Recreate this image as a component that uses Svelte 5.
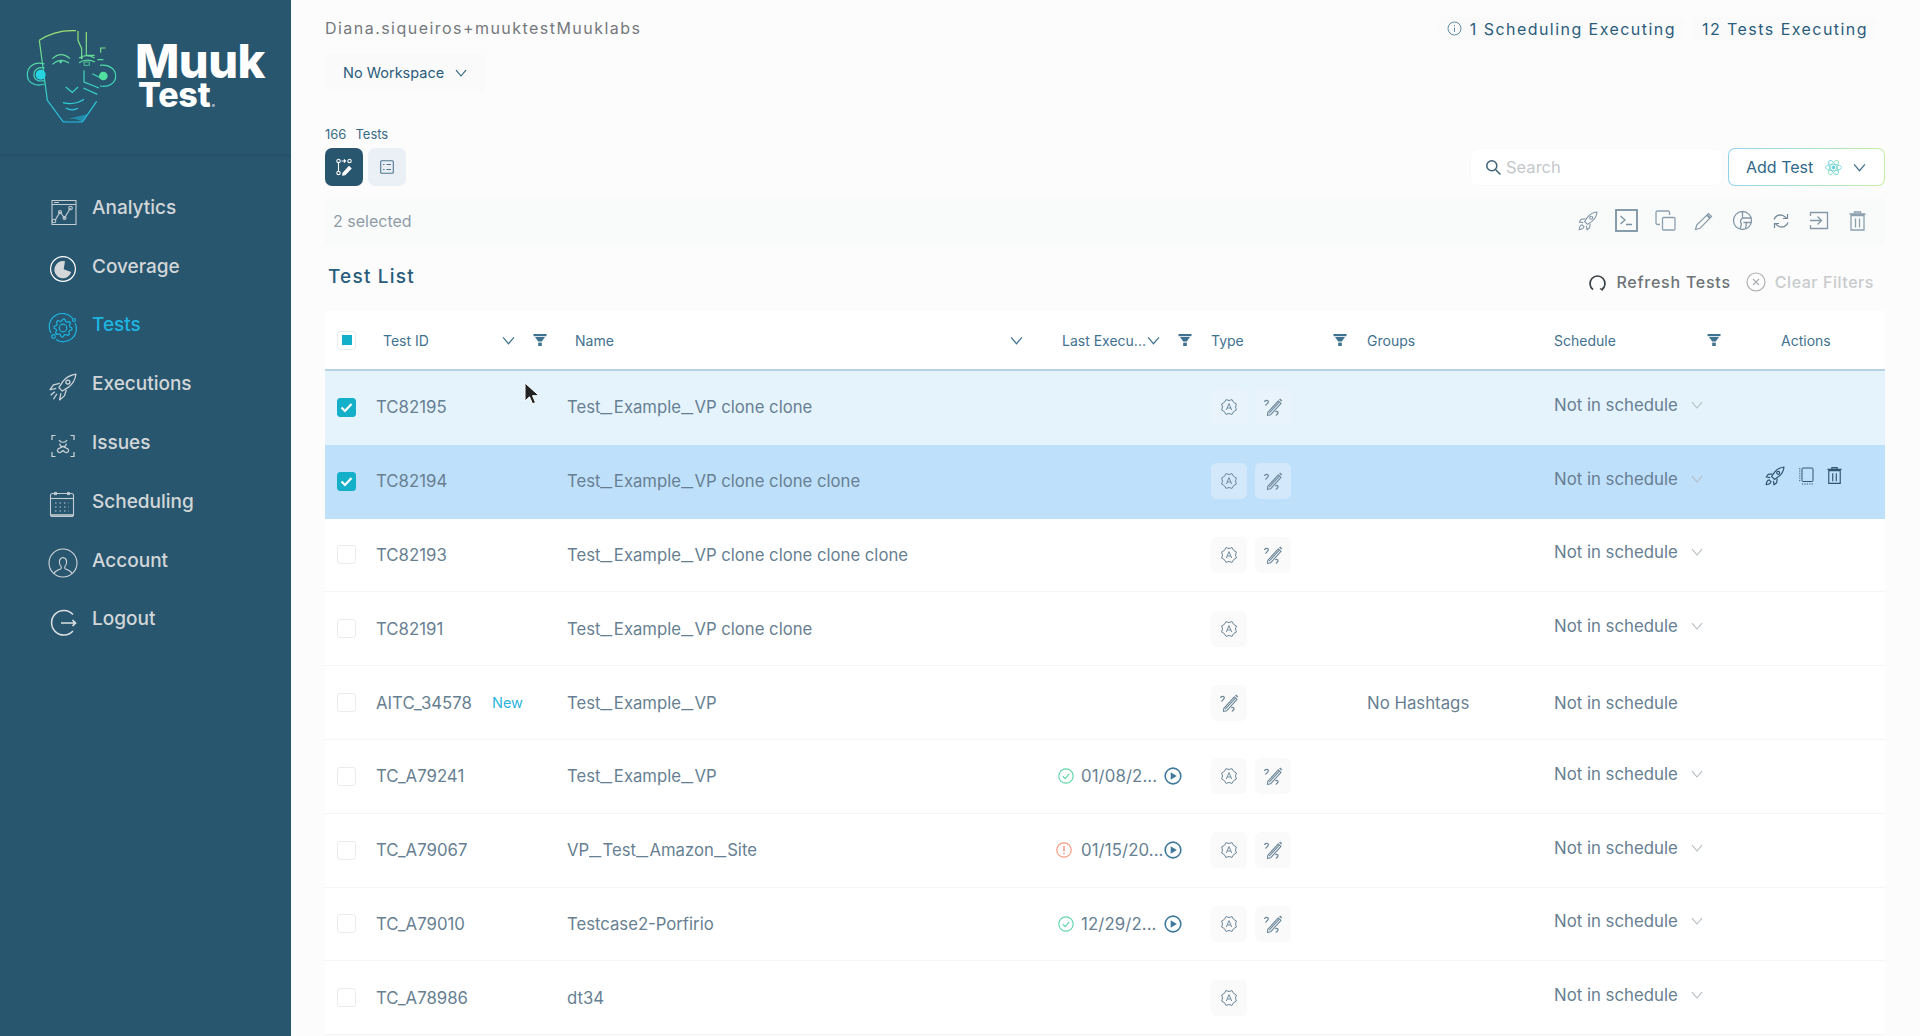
<script>
  const nav = ['Analytics','Coverage','Tests','Executions','Issues','Scheduling','Account','Logout'];
  const rows = [
    {id:'TC82195',name:'Test_Example_VP clone clone',a:1,p:1,cls:'sel'},
    {id:'TC82194',name:'Test_Example_VP clone clone clone',a:1,p:1,cls:'hot'},
    {id:'TC82193',name:'Test_Example_VP clone clone clone clone',a:1,p:1},
    {id:'TC82191',name:'Test_Example_VP clone clone',a:1},
    {id:'AITC_34578',name:'Test_Example_VP',p:1,isNew:1,groups:'No Hashtags',plain:1},
    {id:'TC_A79241',name:'Test_Example_VP',a:1,p:1,date:'01/08/2...',st:'ok'},
    {id:'TC_A79067',name:'VP_Test_Amazon_Site',a:1,p:1,date:'01/15/20...',st:'warn'},
    {id:'TC_A79010',name:'Testcase2-Porfirio',a:1,p:1,date:'12/29/2...',st:'ok'},
    {id:'TC_A78986',name:'dt34',a:1}
  ];
  function gear(cx, cy, r1, r2, n) {
    let d = '';
    for (let i = 0; i < n * 4; i++) {
      const r = (i % 4 < 2) ? r2 : r1;
      const t = (i / (n * 4)) * Math.PI * 2;
      d += (i ? 'L' : 'M') + (cx + r * Math.cos(t)).toFixed(2) + ' ' + (cy + r * Math.sin(t)).toFixed(2);
    }
    return d + 'Z';
  }
  function scallop(cx, cy, r, n) {
    let d = '';
    for (let i = 0; i < n * 2; i++) {
      const rr = i % 2 ? r : r - 1.5;
      const t = (i / (n * 2)) * Math.PI * 2 - Math.PI / 2;
      d += (i ? 'L' : 'M') + (cx + rr * Math.cos(t)).toFixed(2) + ' ' + (cy + rr * Math.sin(t)).toFixed(2);
    }
    return d + 'Z';
  }
</script>

{#snippet chevron(w, color)}
  <svg class="chev" width={w} height={w} viewBox="0 0 12 12" fill="none" stroke={color} stroke-width="1.1"><path d="M1 3.2 6 9 11 3.2"/></svg>
{/snippet}
{#snippet funnel()}
  <svg class="funnel" width="14" height="14" viewBox="0 0 14 14" fill="#3f7290"><path d="M0.5 1h13v2.2h-13z"/><path d="M2 4h10L8.8 8.6H5.2z"/><path d="M5.2 9.6h3.6V13H5.2z"/></svg>
{/snippet}
{#snippet badgeA()}
  <svg width="18" height="18" viewBox="0 0 18 18" fill="none" stroke="#6d8799" stroke-width="1"><path d={scallop(9,9,8,8)} stroke-linejoin="round"/><path d="M6.300 12 9 5.600 11.700 12M7.200 10h3.600" stroke-width="0.95"/></svg>
{/snippet}
{#snippet pen()}
  <svg width="20" height="20" viewBox="0 0 18 18" fill="none" stroke="#6d8799" stroke-width="1"><path d="M4.300 13.800 13.800 3.500l2.400 2.200L6.800 16l-2.800.6z" stroke-linejoin="round"/><path d="M5.500 14.500 14.800 4.600" stroke-width="1"/><path d="M15 1.800l1.800 1.800" stroke-width="1.300"/><path d="M1.500 4c1-1.500 3-1.300 3.300 0 .3 1.400-1.600 2.200-2.300 3.400M11.500 13.200c1.300-.5 2.400.3 1.900 1.500-.3.700-1 1.200-1.500 1.600" stroke-linecap="round" stroke-width="1.100"/></svg>
{/snippet}
{#snippet play()}
  <svg width="18" height="18" viewBox="0 0 17 17" fill="none"><circle cx="8.500" cy="8.500" r="7.400" stroke="#3f7a9e" stroke-width="1.500"/><path d="M6.300 4.900v7.200l5.800-3.600z" fill="#3f7a9e"/></svg>
{/snippet}
{#snippet rocket(c, sw)}
  <svg width="22" height="22" viewBox="0 0 22 22" fill="none" stroke={c} stroke-width={sw} stroke-linejoin="round"><path d="M20 2c-4 .4-7.400 2.400-9.600 5.400L7.600 11.500l2.900 2.900 4.100-2.800C17.600 9.400 19.600 6 20 2z"/><circle cx="14.200" cy="7.800" r="1.500"/><path d="M8.400 8.800 4.200 9.400 2.200 12l4 .6M13.200 13.600l-.6 4.200-2.600 2-.6-4"/><path d="M5.200 14.800c-1.500.3-2.700 1.500-3 4.800 3.300-.3 4.500-1.500 4.800-3z"/></svg>
{/snippet}

<div class="app">
  <aside class="side">
    <div class="brand">
      <svg class="face" width="100" height="100" viewBox="70 85 300 300" fill="none" stroke="url(#fg)" stroke-width="3.600">
        <defs>
          <linearGradient id="fg" gradientUnits="userSpaceOnUse" x1="200" y1="90" x2="200" y2="375">
            <stop offset="0" stop-color="#a4e26a"/><stop offset="0.45" stop-color="#43d6b0"/><stop offset="1" stop-color="#22c4e8"/>
          </linearGradient>
        </defs>
        <path d="M116 125C150 102 190 94 226 96M116 125 140 305 188 370H245L288 308"/>
        <path d="M186 370C210 352 232 362 245 370L262 346 212 358z" fill="#22b8dd" stroke="none" opacity=".55"/>
        <path d="M232 97V125L243 150V176"/><circle cx="243" cy="178" r="3.500" fill="#7fdc8f" stroke="none"/>
        <path d="M257 100V170H282M300 162V148H315M290 183H308"/>
        <path d="M155 180C172 164 190 164 208 180M155 197C172 182 190 182 205 193"/><circle cx="180" cy="190" r="4" fill="#5ed8b0" stroke="none"/>
        <path d="M235 178C250 168 268 170 282 178M235 192C250 183 268 183 283 190"/><path d="M250 190h16v10h-16z" stroke-width="2.500"/>
        <path d="M195 265 215 281 232 265M187 312C210 318 232 314 250 302M195 328C208 335 222 334 232 329"/>
        <path d="M250 215V250L295 268M248 268 290 287M298 200C330 196 345 215 345 232 345 252 325 268 298 262"/>
        <path d="M275 225 300 238"/><circle cx="308" cy="232" r="13" fill="#52e0a0" stroke="none"/>
        <path d="M132 196C100 186 80 205 80 228 80 250 100 266 132 256M132 208C112 204 100 214 100 228 100 242 112 250 132 246"/>
        <circle cx="120" cy="228" r="15" fill="#25d4e0" stroke="none"/>
      </svg>
      <div class="word"><span class="w1">Muuk</span><span class="w2">Test<i>.</i></span></div>
    </div>
    <nav>
      {#each nav as n}
        <div class="item" class:on={n === 'Tests'}>
          <span class="ic">
            {#if n === 'Analytics'}
              <svg width="30" height="30" viewBox="0 0 30 30" fill="none" stroke="#c2ccd2" stroke-width="1.100"><path d="M4 5.500h24v24H4z"/><path d="M4 9.500h24M6 7.500h5" /><path d="M7 25.500 12 17l4.500 6 6-10" stroke-width="1.200"/><circle cx="6" cy="26" r="1.800"/><circle cx="12" cy="17" r="1.500"/><circle cx="16.500" cy="23" r="1.500"/><circle cx="22.500" cy="13" r="1.800"/></svg>
            {:else if n === 'Coverage'}
              <svg width="30" height="30" viewBox="0 0 30 30" fill="none"><circle cx="15" cy="15" r="12.400" stroke="#fff" stroke-width="1.200"/><path d="M17 7.300A8.600 8.600 0 1 0 23.200 18L15.700 15.200Z" fill="#d5d8da"/></svg>
            {:else if n === 'Tests'}
              <svg width="30" height="30" viewBox="0 0 30 30" fill="none" stroke="#1cb5e0" stroke-width="1.200"><path d="M3 20A13 13 0 0 1 24.500 5.500M27 10A13 13 0 0 1 8 26.500"/><path d={gear(15,15,7,9,8)} stroke-linejoin="round"/><circle cx="15" cy="15" r="3.800"/><circle cx="26" cy="7" r="1.500"/><circle cx="5.500" cy="23.500" r="1.800"/></svg>
            {:else if n === 'Executions'}
              <svg width="30" height="30" viewBox="0 0 22 22" fill="none" stroke="#d0d6da" stroke-width=".9" stroke-linejoin="round"><path d="M20.500 1.500c-4 .6-7.400 2.400-9.600 5.400L8 11.500l2.500 2.500 4.600-2.900C18 8.900 20 5.500 20.500 1.500z"/><circle cx="14.600" cy="7.400" r="1.500"/><path d="M8.600 8.400 4 9.500 1.500 13l4.500-1M13.500 13l-1.500 4.500-3.500 3 1-5"/><path d="M5 14.500 2 17M6.500 16 4 20M3.500 15.500 2.500 16.500"/></svg>
            {:else if n === 'Issues'}
              <svg width="30" height="30" viewBox="0 0 30 30" fill="none" stroke="#d0d6da" stroke-width="1.200"><path d="M4 9V4.500h3.500M26 9V4.500h-3.500M4 21v4.500h3.500M26 21v4.500h-3.500"/><path d="M11 9c1.500 3 6.500 3 8 0M12 12.500c-.5 2 .5 3 3 3s3.500-1 3-3M15 15.500 10 18c-1.500 2 0 4 2.500 3.500L15 19.500l2.500 2c2.500.5 4-1.500 2.500-3.500z"/></svg>
            {:else if n === 'Scheduling'}
              <svg width="30" height="30" viewBox="0 0 30 30" fill="none" stroke="#c2ccd2" stroke-width="1.100"><rect x="2.500" y="4.500" width="23" height="23" rx="2"/><path d="M2.500 9.500h23" /><path d="M2.500 26h23" stroke-width="1.600"/><circle cx="7.500" cy="4.500" r="1.300"/><circle cx="20.500" cy="4.500" r="1.300"/><path d="M7 14h14M7 18h14M7 22h14" stroke-dasharray="1.500 3"/></svg>
            {:else if n === 'Account'}
              <svg width="30" height="30" viewBox="0 0 30 30" fill="none" stroke="#d0d6da" stroke-width="1.100"><circle cx="15" cy="15" r="14"/><path d="M6 25.500c1-3 4-3.500 6.500-4.500 1-.5 1-2 .3-3-2-2.200-2.400-8 2.200-8.500 4.600.5 4.200 6.300 2.200 8.500-.7 1-.7 2.500.3 3 2.500 1 5.500 1.500 6.500 4.500"/></svg>
            {:else}
              <svg width="30" height="30" viewBox="0 0 30 30" fill="none" stroke="#dcdfe1" stroke-width="1.500"><path d="M25 7.500A12.300 12.300 0 1 0 25 24"/><path d="M13 16h14.500M24.500 13l3 3-3 3" stroke-width="1.700"/></svg>
            {/if}
          </span>
          <span class="lbl">{n}</span>
        </div>
      {/each}
    </nav>
  </aside>

  <main>
    <header class="top">
      <span class="user">Diana.siqueiros+muuktestMuuklabs</span>
      <div class="execs">
        <span class="exec"><svg width="15" height="15" viewBox="0 0 15 15" fill="none" stroke="#4f7f9b" stroke-width=".9"><circle cx="7.500" cy="7.500" r="6.500"/><path d="M7.500 6.500v4.500M7.500 4v1.200"/></svg>1 Scheduling Executing</span>
        <span class="exec">12 Tests Executing</span>
      </div>
    </header>
    <button class="ws"><span>No Workspace</span>{@render chevron(12, '#2a5d7c')}</button>
    <div class="count"><span>166</span><span>Tests</span></div>
    <div class="controls">
      <div class="toggles">
        <span class="tg dark"><svg width="18" height="18" viewBox="0 0 18 18" fill="none" stroke="#fff" stroke-width="1.100"><circle cx="3.500" cy="3" r="1.700"/><circle cx="3.500" cy="15" r="1.700"/><circle cx="14.500" cy="3" r="1.700"/><path d="M3.500 5v8M6.500 3h4M9 1.500 10.500 3 9 4.500"/><path d="M8 15l6-6.500 2 2-6 6.300-2.300.3z" fill="#fff"/></svg></span>
        <span class="tg light"><svg width="14" height="14" viewBox="0 0 14 14" fill="none" stroke="#4f7590" stroke-width="1.100"><rect x=".7" y=".7" width="12.600" height="12.600" rx="1"/><path d="M3 4.500h1.500M6.500 4.500H11M3 9.500h1.500M6.500 9.500H11"/></svg></span>
      </div>
      <div class="right">
        <div class="search"><svg width="17" height="17" viewBox="0 0 17 17" fill="none" stroke="#3c6076" stroke-width="1.500"><circle cx="6.800" cy="6.800" r="5"/><path d="M10.500 10.500 15.500 15.500"/></svg><span>Search</span></div>
        <button class="add"><span>Add Test</span>
          <svg width="17" height="19" viewBox="0 0 17 19" fill="none" stroke="#62cfe0" stroke-width=".8"><ellipse cx="8.500" cy="9.500" rx="8" ry="3.200"/><ellipse cx="8.500" cy="9.500" rx="8" ry="3.200" transform="rotate(60 8.500 9.500)"/><ellipse cx="8.500" cy="9.500" rx="8" ry="3.200" transform="rotate(120 8.500 9.500)" stroke="#7fdcb0"/><circle cx="8.500" cy="9.500" r="1.400" fill="#62cfe0"/></svg>
          {@render chevron(13, '#3f6f8c')}
        </button>
      </div>
    </div>
    <div class="bar">
      <span>2 selected</span>
      <div class="tools">
        <span class="t">{@render rocket('#8598a6', 1.1)}</span>
        <span class="t"><svg width="23" height="23" viewBox="0 0 23 23" fill="none" stroke="#7c93a4"><rect x="1" y="1" width="21" height="21" stroke-width="1.800"/><path d="M5.500 7 10 11 5.500 15M11 15.500h6" stroke-width="1.300"/></svg></span>
        <span class="t"><svg width="21" height="21" viewBox="0 0 21 21" fill="none" stroke="#8da0ae" stroke-width="1.300"><path d="M5 14.500H2.500a1.500 1.500 0 0 1-1.500-1.500V2.500A1.500 1.500 0 0 1 2.500 1H13a1.500 1.500 0 0 1 1.500 1.500V5"/><rect x="7.500" y="7.500" width="12.500" height="12.500" rx="1"/></svg></span>
        <span class="t"><svg width="20" height="20" viewBox="0 0 20 20" fill="none" stroke="#8598a6" stroke-width="1.200"><path d="M1.500 18.500 2.700 14 14.500 2.500l3 3L6 17.300z"/><path d="M13 4l3 3" stroke-width="2"/></svg></span>
        <span class="t"><svg width="21" height="21" viewBox="0 0 21 21" fill="none" stroke="#8598a6" stroke-width="1.300"><circle cx="10.500" cy="10.500" r="9"/><path d="M10.500 1.500V8C8 10 8 12 9.500 14L8 19M10.500 8h9M11.500 12.500h8M14.500 12.500 13.500 19"/></svg></span>
        <span class="t"><svg width="20" height="20" viewBox="0 0 20 20" fill="none" stroke="#758b9b" stroke-width="1.300"><path d="M3 8.500C4 5 8 3 12 4.500l3.500 2.500M17 11.500C16 15 12 17 8 15.500L4.500 13"/><path d="M16.500 3v4.500H12M3.500 17v-4.500H8" stroke-width="1.200"/></svg></span>
        <span class="t"><svg width="20" height="19" viewBox="0 0 20 19" fill="none" stroke="#8598a6" stroke-width="1.300"><path d="M1.500 5V1.500h17v16h-17V14M1 9.500h11M8.500 5.500l4 4-4 4"/></svg></span>
        <span class="t"><svg width="17" height="20" viewBox="0 0 17 20" fill="none" stroke="#8da0ae" stroke-width="1.300"><path d="M2 4.500h13V19H2zM.5 3h16M5.500 3V1h6v2M6.500 7.500v9M10.500 7.500v9"/></svg></span>
      </div>
    </div>
    <div class="listhead">
      <h2>Test List</h2>
      <div class="links">
        <span class="ref"><svg width="19" height="19" viewBox="0 0 19 19" fill="none" stroke="#3a3f44" stroke-width="1.700"><path d="M5 16.500A7.500 7.500 0 1 1 14 16.500"/><path d="M12 15.500 14.300 17l.6-2.300" stroke-width="1.200"/></svg><span>Refresh Tests</span></span>
        <span class="clr"><svg width="20" height="20" viewBox="0 0 20 20" fill="none" stroke="#a8acaf" stroke-width="1.100"><circle cx="10" cy="10" r="9"/><path d="M7 7l6 6M13 7l-6 6"/></svg><span>Clear Filters</span></span>
      </div>
    </div>

    <div class="table">
      <div class="grid thead">
        <div class="c0"><span class="box ind"><i></i></span></div>
        <div class="h hid"><span>Test ID</span>{@render chevron(13, '#3f7290')}{@render funnel()}</div>
        <div class="h hname"><span>Name</span>{@render chevron(13, '#3f7290')}</div>
        <div class="h hlast"><span>Last Execu...</span>{@render chevron(13, '#3f7290')}{@render funnel()}</div>
        <div class="h htype"><span>Type</span>{@render funnel()}</div>
        <div class="h"><span>Groups</span></div>
        <div class="h hsch"><span>Schedule</span>{@render funnel()}</div>
        <div class="h hact"><span>Actions</span></div>
      </div>
      {#each rows as r}
        <div class="grid row {r.cls || ''}">
          <div class="c0">
            <span class="box" class:chk={r.cls}>
              {#if r.cls}<svg width="13" height="11" viewBox="0 0 13 11" fill="none" stroke="#fff" stroke-width="2.200"><path d="M1.500 5.500 5 9l6.500-7"/></svg>{/if}
            </span>
          </div>
          <div class="id">{r.id}{#if r.isNew}<em>New</em>{/if}</div>
          <div class="name">{#each r.name.split('_') as part, i}{#if i}<span class="us">_</span>{/if}{part}{/each}</div>
          <div class="last">
            {#if r.date}
              <span class="st" class:warn={r.st === 'warn'}>
                {#if r.st === 'ok'}
                  <svg width="16" height="16" viewBox="0 0 16 16" fill="none" stroke="#62d6ab" stroke-width="1.200"><circle cx="8" cy="8" r="7.200"/><path d="M4.800 8.300 7.200 10.600 11.200 5.800"/></svg>
                {:else}
                  <svg width="16" height="16" viewBox="0 0 16 16" fill="none" stroke="#f59a80" stroke-width="1.200"><circle cx="8" cy="8" r="7.200"/><path d="M8 3.800v5.400M8 10.800v1.400" stroke-width="1.500"/></svg>
                {/if}
              </span>
              <span class="date">{r.date}</span>
              <span class="pl">{@render play()}</span>
            {/if}
          </div>
          <div class="type">
            {#if r.a}<span class="chip">{@render badgeA()}</span>{/if}
            {#if r.p}<span class="chip">{@render pen()}</span>{/if}
          </div>
          <div class="groups">{r.groups || ''}</div>
          <div class="sch" class:plain={r.plain}>
            <span>Not in schedule</span>
            {#if !r.plain}{@render chevron(12, '#b3bcc3')}{/if}
          </div>
          <div class="act">
            {#if r.cls === 'hot'}
              {@render rocket('#2f566e', 1.2)}
              <svg width="15" height="18" viewBox="0 0 15 18" fill="none" stroke="#2f566e"><rect x="3" y="1" width="11" height="13.500" rx="1" stroke-width="1"/><path d="M.8 1v14M3 17h11" stroke-width="1" stroke-dasharray="1.200 1.200"/></svg>
              <svg width="15" height="19" viewBox="0 0 17 20" fill="none" stroke="#2f566e" stroke-width="1.300"><path d="M2 4.500h13V19H2zM.5 3h16M5.500 3V1h6v2M6.500 7.500v9M10.500 7.500v9"/></svg>
            {/if}
          </div>
        </div>
      {/each}
    </div>
    <svg class="cursor" width="16" height="24" viewBox="0 0 16 24"><path d="M1 1v18l4.500-4.200 3 7 3-1.300-3-6.800H15z" fill="#222" stroke="#fff" stroke-width="1"/></svg>
  </main>
</div>

<style>
  :global(body) { margin: 0; overflow: hidden; background: #fcfcfc; }
  .app { display: flex; width: 1920px; height: 1036px; overflow: hidden; font-family: Inter, "Liberation Sans", sans-serif; }
  .side { width: 291px; flex: none; background: #28566f; box-shadow: 1px 0 3px rgba(0,0,0,.12); }
  .brand { height: 155px; box-sizing: border-box; display: flex; align-items: flex-start; padding: 27px 0 0 24px; border-bottom: 1px solid #265269; box-shadow: 0 1px 2px rgba(0,0,0,.06); }
  .face { flex: none; }
  .word { display: flex; flex-direction: column; color: #fff; font-weight: 800; margin: 14px 0 0 11px; }
  .w1 { font-size: 47px; line-height: 40px; letter-spacing: -.5px; }
  .w2 { font-size: 34px; line-height: 27px; margin-left: 3px; letter-spacing: -.2px; }
  .w2 i { color: #9fb2bf; font-size: 16px; font-style: normal; margin-left: 0; }
  nav { padding-top: 23px; }
  .item { height: 58.800px; display: flex; align-items: center; padding-left: 48px; color: #d2d6d9; font-size: 19px; font-weight: 500; }
  .item.on { color: #1cb5e0; }
  .ic { width: 30px; height: 30px; margin-top: 6px; flex: none; }
  .lbl { margin-left: 14px; }

  main { position: relative; flex: 1; min-width: 0; padding: 0 35px 0 34px; box-sizing: border-box; background: #fcfcfc; }
  .top { height: 54px; box-sizing: border-box; padding-top: 17px; display: flex; justify-content: space-between; }
  .user { color: #75797d; font-size: 16px; letter-spacing: 1.460px; line-height: 23px; }
  .execs { display: flex; gap: 10px; margin-right: 9px; }
  .exec { display: flex; align-items: center; gap: 8px; height: 23px; padding: 0 8px; background: #fafafa; border-radius: 6px; color: #2a5d7c; font-size: 16px; letter-spacing: 1.450px; }
  .ws { display: flex; align-items: center; gap: 11px; height: 37px; width: 161px; box-sizing: border-box; padding: 0 0 0 18px; border: 0; border-radius: 6px; background: #fafafa; color: #2a5d7c; font: 14.500px Inter, sans-serif; }
  .count { display: flex; gap: 9px; margin-top: 35px; height: 16px; line-height: 16px; font-size: 13px; color: #3b6a85; }
  .controls { display: flex; justify-content: space-between; margin-top: 6px; height: 38px; }
  .toggles { display: flex; gap: 5px; }
  .tg { width: 38px; height: 38px; border-radius: 7px; display: flex; align-items: center; justify-content: center; }
  .dark { background: #28566f; }
  .light { background: #eaf0f5; }
  .right { display: flex; gap: 6px; }
  .search { width: 251px; height: 36px; margin-top: 1px; box-sizing: border-box; padding-left: 14px; display: flex; align-items: center; gap: 4px; background: #fff; border-radius: 6px; box-shadow: 0 0 2px rgba(0,0,0,.06); color: #c4c8cb; font-size: 16.500px; }
  .add { width: 157px; height: 38px; box-sizing: border-box; padding: 0 0 0 17px; display: flex; align-items: center; border: 1.500px solid transparent; border-radius: 7px; background: linear-gradient(#fff,#fff) padding-box, linear-gradient(90deg,#8fd2ee,#c6eda6) border-box; color: #2f6888; font: 16px Inter, sans-serif; }
  .add svg:first-of-type { margin-left: 12px; }
  .add :global(.chev) { margin-left: 11px; }
  .bar { margin-top: 11px; height: 48px; display: flex; align-items: center; justify-content: space-between; padding: 0 8px 0 8px; background: #f9fafa; border-radius: 6px; color: #8f9ca8; font-size: 16px; }
  .tools { display: flex; align-items: center; gap: 0; margin-top: -1px; }
  .t { width: 38.500px; display: flex; justify-content: center; }
  .listhead { height: 66px; display: flex; justify-content: space-between; }
  h2 { margin: 20px 0 0 3px; font-weight: 500; font-size: 19px; line-height: 24px; letter-spacing: 1.200px; color: #2a5d7c; }
  .links { display: flex; gap: 15px; margin: 25px 11px 0 0; height: 24px; font-size: 16px; letter-spacing: .55px; }
  .ref, .clr { display: flex; align-items: center; gap: 9px; }
  .ref { color: #6d7377; font-weight: 500; letter-spacing: .75px; }
  .clr { color: #c8cbcd; font-weight: 500; }

  .table { background: #fff; margin-right: 0; }
  .grid { display: grid; grid-template-columns: 51px 191px 488px 156px 156px 187px 221px 110px; align-items: center; box-sizing: border-box; }
  .thead { height: 60px; border-bottom: 2px solid #b8d2e6; color: #3f7290; font-size: 14px; }
  .row { height: 73.800px; border-bottom: 1px solid #f3f4f5; color: #677f92; font-size: 16.800px; }
  .row.sel { background: #e5f3fd; border-color: #e5f3fd; }
  .row.hot { background: #bfe0fb; border-color: #bfe0fb; }
  .c0 { padding-left: 12px; display: flex; }
  .box { width: 19px; height: 19px; box-sizing: border-box; border: 1px solid #e9ebed; border-radius: 3px; background: #fff; display: flex; align-items: center; justify-content: center; }
  .box.ind i { width: 10px; height: 10px; background: #14b0c9; }
  .box.chk { background: #14b0c9; border-color: #14b0c9; }
  .h { display: flex; align-items: center; height: 20px; }
  .hid { padding-left: 7px; }
  .hid :global(.chev) { margin-left: auto; }
  .hid :global(.funnel) { margin: 0 20px 0 18px; }
  .hname { padding-left: 8px; padding-right: 32px; }
  .hname :global(.chev) { margin-left: auto; }
  .hlast { padding-left: 7px; margin-left: 0; }
  .hlast :global(.chev) { margin-left: 1px; }
  .hlast :global(.funnel) { margin-left: 18px; }
  .htype { padding-right: 20px; }
  .htype :global(.funnel) { margin-left: auto; }
  .hsch { padding-right: 54px; }
  .hsch :global(.funnel) { margin-left: auto; }
  .hact { padding-left: 6px; }
  .id { display: flex; align-items: center; }
  .id em { font-style: normal; color: #2db5dc; font-size: 14.500px; margin-left: 20px; }
  .name { font-size: 16.700px; white-space: nowrap; }
  .us { display: inline-block; width: 13.400px; transform: scaleX(1.600); transform-origin: left; }
  .last { display: flex; align-items: center; }
  .st { display: flex; margin-left: 3px; margin-right: 7px; }
  .st.warn { margin-left: 1px; margin-right: 9px; }
  .date { white-space: nowrap; letter-spacing: .1px; }
  .pl { display: flex; margin-left: auto; margin-right: 29px; }
  .type { display: flex; gap: 8px; }
  .chip { width: 36px; height: 36px; border-radius: 6px; background: #fafafa; display: flex; align-items: center; justify-content: center; }
  .row.sel .chip { background: #e9f3fb; }
  .row.hot .chip { background: #d3e9fb; }
  .groups { font-size: 16.800px; }
  .sch { display: flex; align-items: center; gap: 13px; margin-top: -5px; font-size: 16.800px; }
  .sch.plain { margin-top: 0; }
  .act { display: flex; align-items: center; gap: 13px; margin: -11px 0 0 -11px; }
  .cursor { position: absolute; left: 233px; top: 382px; }
</style>
